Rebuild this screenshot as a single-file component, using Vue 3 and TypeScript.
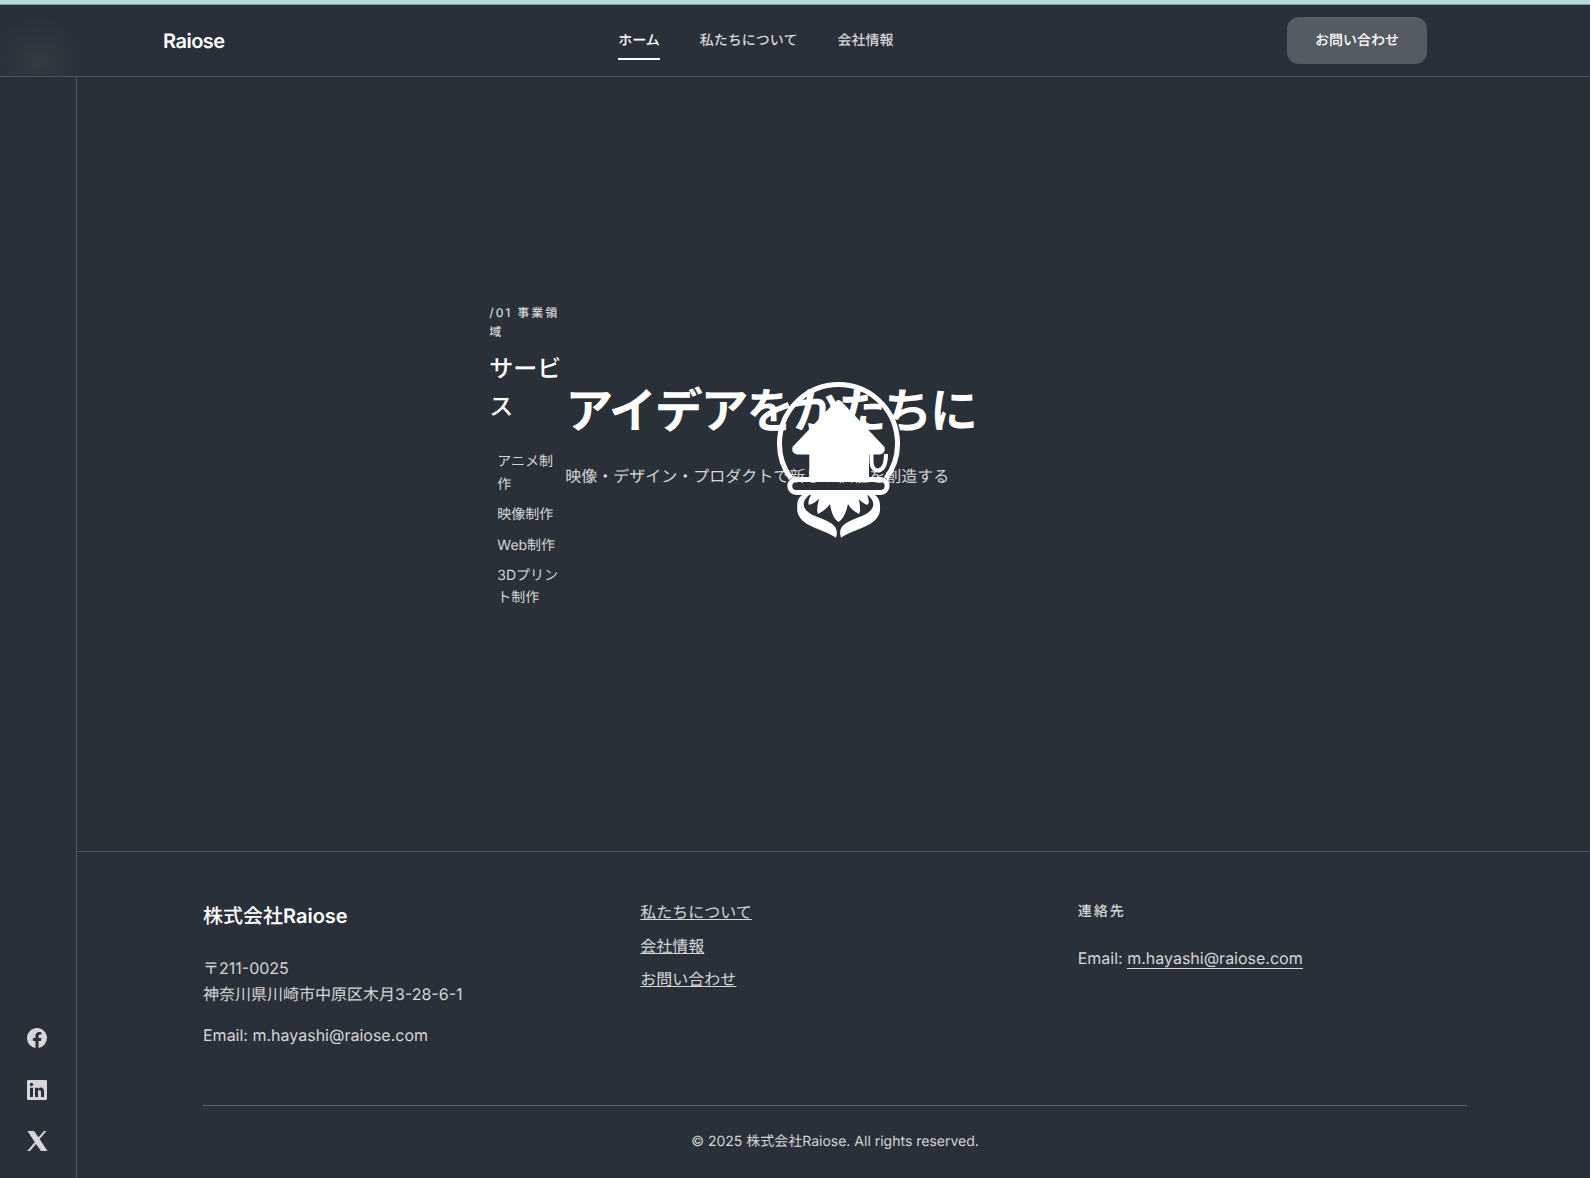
<script setup lang="ts">
const navItems = ['ホーム', '私たちについて', '会社情報']
const services = ['アニメ制作', '映像制作', 'Web制作', '3Dプリント制作']
const footerLinks = ['私たちについて', '会社情報', 'お問い合わせ']
const socials = [
  { name: 'Facebook', d: 'M12 2.04C6.5 2.04 2 6.53 2 12.06C2 17.06 5.66 21.21 10.44 21.96V14.96H7.9V12.06H10.44V9.85C10.44 7.34 11.93 5.96 14.22 5.96C15.31 5.96 16.45 6.15 16.45 6.15V8.62H15.19C13.95 8.62 13.56 9.39 13.56 10.18V12.06H16.34L15.89 14.96H13.56V21.96A10 10 0 0 0 22 12.06C22 6.53 17.5 2.04 12 2.04Z' },
  { name: 'LinkedIn', d: 'M3 2h18a1 1 0 0 1 1 1v18a1 1 0 0 1-1 1H3a1 1 0 0 1-1-1V3a1 1 0 0 1 1-1ZM5 9.7V19h3V9.7ZM6.5 4.8a1.7 1.7 0 1 0 0 3.4a1.7 1.7 0 0 0 0-3.4ZM10 9.7V19h3v-5c0-2.7 3-2.4 3 0v5h3v-5.8c0-4.3-4.4-4.6-6-2.1V9.7Z' },
  { name: 'X', d: 'M2.5 2H9l4.500 6.300L19 2h2.500l-6.900 8L22.500 22H16l-5-7L5 22H2.200l7.600-8.700Z' },
]
</script>

<template>
  <div class="page">
    <div class="accent"></div>
    <header class="header">
      <div class="header-inner">
        <a class="logo">Raiose</a>
        <nav class="nav">
          <a v-for="(n, i) in navItems" :key="n" class="nav-link" :class="{ active: i === 0 }">{{ n }}</a>
        </nav>
        <a class="cta">お問い合わせ</a>
      </div>
    </header>
    <div class="body">
      <aside class="sidebar">
        <a v-for="s in socials" :key="s.name" class="social" :aria-label="s.name">
          <svg viewBox="0 0 24 24" width="24" height="24"><path fill="currentColor" fill-rule="evenodd" :d="s.d" /></svg>
        </a>
      </aside>
      <div class="content">
        <main class="hero">
          <section class="services">
            <p class="label">/01 事業領域</p>
            <h2>サービス</h2>
            <ul>
              <li v-for="s in services" :key="s">{{ s }}</li>
            </ul>
          </section>
          <section class="headline">
            <h1>アイデアをかたちに</h1>
            <p>映像・デザイン・プロダクトで新しい価値を創造する</p>
          </section>
          <svg class="emblem" viewBox="0 0 130 160" width="130" height="160">
            <path d="M16 97.500A59 59 0 1 1 111 97.500" fill="none" stroke="#fff" stroke-width="5" />
            <path d="M60 21Q63.500 17 67 21L109.500 66Q111 72 105 73.500H94V98H34.300V73.500H22Q16 72 17.500 66Z" fill="#fff" />
            <path d="M96.500 73V81Q97 89.500 103.500 89.500Q111 88 111 73" fill="none" stroke="#fff" stroke-width="4" />
            <rect x="14.800" y="98.600" width="97.300" height="12.800" rx="6.400" fill="none" stroke="#fff" stroke-width="5" />
            <path d="M35 111H92C92 117 96 121 92 124Q86 121 84 118Q86 131 84 133Q76 129 73 123Q70 137 63.500 141Q57 137 55 123Q51 129 43 133Q41 129 44 118Q40 122 34 124Q32 121 36 114Z" fill="#fff" />
            <path d="M32 111C22 116 22 120 22.300 130C25 146 47 147 61 156.700C65 144 55 141 40 135C26 129 25 120 37 112ZM95 111C105 116 105.300 120 105 130C102 146 80 147 66 156.700C62 144 72 141 87 135C101 129 102 120 90 112Z" fill="#fff" />
          </svg>
        </main>
        <footer class="footer">
          <div class="columns">
            <div>
              <h3>株式会社<span>Raiose</span></h3>
              <p class="address">〒211-0025<br />神奈川県川崎市中原区木月3-28-6-1</p>
              <p>Email: m.hayashi@raiose.com</p>
            </div>
            <ul class="links">
              <li v-for="l in footerLinks" :key="l"><a>{{ l }}</a></li>
            </ul>
            <div>
              <h4>連絡先</h4>
              <p>Email: <a class="mail">m.hayashi@raiose.com</a></p>
            </div>
          </div>
          <p class="copyright">© 2025 株式会社Raiose. All rights reserved.</p>
        </footer>
      </div>
    </div>
  </div>
</template>

<style>
body { margin: 0; background: #2a3037; }
</style>

<style scoped>
* { box-sizing: border-box; margin: 0; padding: 0; }
.page {
  height: 1178px; display: flex; flex-direction: column; overflow: hidden; text-rendering: geometricPrecision;
  font-family: Inter, "Noto Sans CJK JP", sans-serif; font-size: 16px; line-height: 1.6; color: #d4d6d7;
}
.accent { height: 5px; flex: none; background: #b6dcdf; border-bottom: 1px solid #829ba1; }
.header {
  height: 72px; flex: none; border-bottom: 1px solid #50565e;
  background: radial-gradient(circle 46px at 38px 57px, #323a42, transparent), #2a3039;
}
.header-inner { width: 1264px; height: 71px; margin: 0 auto; display: flex; align-items: center; justify-content: space-between; }
.logo { font-size: 20px; font-weight: 600; color: #fff; letter-spacing: -0.5px; }
.nav { display: flex; gap: 40px; font-size: 14px; font-weight: 500; }
.nav-link { padding: 9px 0 6px; line-height: 22px; border-bottom: 2px solid transparent; }
.active { color: #fff; border-bottom-color: #fff; }
.cta { width: 140px; height: 47px; padding-top: 2px; display: grid; place-items: center; border-radius: 12px; background: #555b62; color: #fff; font-size: 14px; font-weight: 500; }
.body { flex: 1; display: flex; min-height: 0; }
.sidebar {
  width: 77px; flex: none; border-right: 1px solid #50565e; background: #2a3039;
  display: flex; flex-direction: column; align-items: center; justify-content: flex-end; gap: 27.500px; padding: 0 2px 25px 0;
}
.social { width: 24px; height: 24px; }
.social svg { display: block; }
.content { flex: 1; display: flex; flex-direction: column; }
.hero { position: relative; flex: 1; display: flex; padding-left: 412.300px; }
.services { width: 76px; padding-top: 226px; }
.label { font-size: 12px; font-weight: 500; letter-spacing: 1.920px; line-height: 19.2px; width: 78px; }
h2 { font-size: 24px; font-weight: 500; line-height: 38.4px; color: #fff; margin: 8.600px 0 24.600px; width: 74px; }
ul { list-style: none; }
.services ul { font-size: 14px; line-height: 22.4px; padding-left: 8px; }
.services li { width: 62px; margin-bottom: 8px; }
.headline { padding-top: 298px; white-space: nowrap; }
h1 { font-size: 48px; font-weight: 700; letter-spacing: -2.100px; line-height: 72px; color: #fff; margin-bottom: 17px; }
.emblem { position: absolute; left: 698px; top: 303.600px; }
.footer { height: 327px; flex: none; border-top: 1px solid #50565e; background: #2a3039; padding: 48px 123px 0 126px; }
.columns { display: grid; grid-template-columns: repeat(3, 1fr); gap: 48px; height: 206px; border-bottom: 1px solid #5b6169; }
h3 { font-size: 20px; font-weight: 500; line-height: 32px; color: #fff; margin-bottom: 24px; }
h3 span { font-weight: 600; }
.address { margin-bottom: 16px; }
.links li { margin-bottom: 8px; }
.links a { text-decoration: underline; }
h4 { font-size: 14px; font-weight: 500; letter-spacing: 2px; line-height: 22.4px; padding-top: 1px; margin-bottom: 23px; }
.mail { border-bottom: 1px solid; }
.copyright { font-size: 14px; text-align: center; padding-top: 25px; }
</style>
